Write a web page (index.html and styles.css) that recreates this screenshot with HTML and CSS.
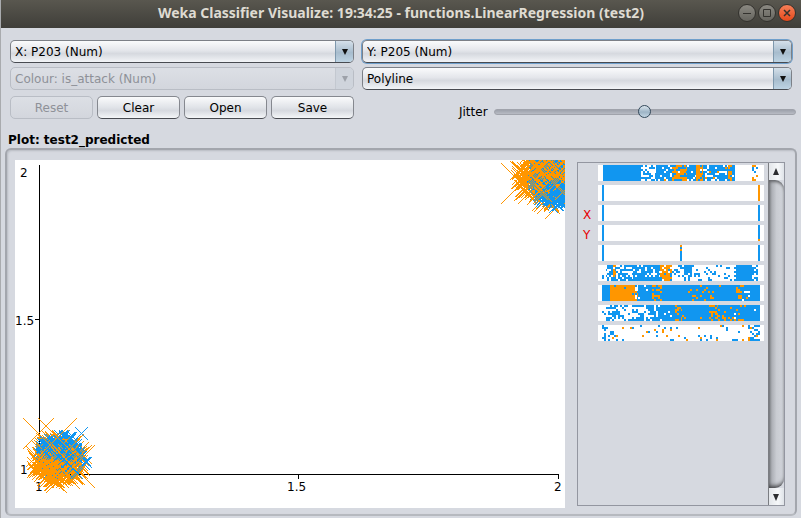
FILE: index.html
```html
<!DOCTYPE html>
<html lang="en">
<head>
<meta charset="utf-8">
<title>Weka Classifier Visualize</title>
<link rel="stylesheet" href="styles.css">
</head>
<body>
<div class="window">
  <header class="titlebar">
    <h1 class="title">Weka Classifier Visualize: 19:34:25 - functions.LinearRegression (test2)</h1>
    <div class="window-buttons">
      <button class="winbtn" aria-label="Minimize"><svg viewBox="0 0 16 16"><path d="M4 8.500h8"/></svg></button>
      <button class="winbtn" aria-label="Maximize"><svg viewBox="0 0 16 16"><path d="M4.500 4.500h7v7h-7z"/></svg></button>
      <button class="winbtn close" aria-label="Close"><svg viewBox="0 0 16 16"><path d="M5 5l6 6M11 5l-6 6"/></svg></button>
    </div>
  </header>
  <main class="content">
    <form class="controls">
      <div class="combo"><select aria-label="X axis"><option>X: P203 (Num)</option></select></div>
      <div class="combo focused"><select aria-label="Y axis"><option>Y: P205 (Num)</option></select></div>
      <div class="combo off"><select aria-label="Colour" disabled><option>Colour: is_attack (Num)</option></select></div>
      <div class="combo"><select aria-label="Selection shape"><option>Polyline</option></select></div>
      <div class="buttons">
        <button type="button" class="btn" disabled>Reset</button>
        <button type="button" class="btn">Clear</button>
        <button type="button" class="btn">Open</button>
        <button type="button" class="btn">Save</button>
      </div>
      <div class="jitter">
        <label for="jitter">Jitter</label>
        <input id="jitter" type="range" min="0" max="100" value="50">
      </div>
    </form>
    <h2 class="plot-title">Plot: test2_predicted</h2>
    <section class="plot-panel">
      <svg class="plot" viewBox="0 0 550 348" role="img" aria-label="Scatter plot of P203 against P205">
        <g class="axes">
          <path d="M24.500 5V315M24 314.500H543.500M20 159.500H24M283.500 314V319M543.500 314V319"/>
          <text x="5" y="17">2</text>
          <text x="0" y="165">1.5</text>
          <text x="5" y="314">1</text>
          <text x="20" y="331">1</text>
          <text x="272" y="331">1.5</text>
          <text x="539" y="331">2</text>
        </g>
        <g id="points" class="dots"></g>
      </svg>
      <div class="attributes">
        <div class="attr-list" id="attributes"></div>
        <div class="scrollbar">
          <button class="scroll-btn" aria-label="Scroll up"><svg viewBox="0 0 8 8"><path d="M4 0L7 7H1z"/></svg></button>
          <div class="scroll-track"></div>
          <button class="scroll-btn" aria-label="Scroll down"><svg viewBox="0 0 8 8"><path d="M1 1h6L4 8z"/></svg></button>
        </div>
      </div>
    </section>
  </main>
</div>
<script src="plot.js"></script>
</body>
</html>
```
FILE: styles.css
```css
* { box-sizing: border-box; }

body {
  margin: 0;
  background: #d6d9e0;
  font: 12px/16px "DejaVu Sans", Verdana, sans-serif;
  color: #000;
}

button, select, input { font: inherit; color: inherit; margin: 0; }

.window {
  min-height: 100vh;
  border-left: 1px solid #a9abae;
  display: flex;
  flex-direction: column;
}

.titlebar {
  height: 28px;
  display: grid;
  grid-template-columns: 1fr auto 1fr;
  align-items: center;
  padding: 0 5px 2px;
  background: linear-gradient(#59574f, #3f3e39);
}

.title {
  grid-column: 2;
  margin: 0;
  font: bold 14px/20px "Noto Sans", "Open Sans", sans-serif;
  color: #dfdbd2;
  white-space: nowrap;
}

.window-buttons {
  display: flex;
  justify-content: flex-end;
  gap: 2px;
}

.winbtn {
  width: 18px;
  height: 18px;
  padding: 0;
  border: 1px solid #33322e;
  border-radius: 50%;
  background: linear-gradient(#8b8982, #65645e);
}

.winbtn svg {
  display: block;
  width: 16px;
  height: 16px;
  fill: none;
  stroke: #33322e;
  stroke-width: 1;
}

.winbtn.close { background: linear-gradient(#f67f58, #e4491b); }
.winbtn.close svg { stroke-width: 1.5; }

.content {
  flex: 1;
  display: flex;
  flex-direction: column;
  padding: 12px 4px 2px;
}

.controls {
  display: grid;
  grid-template-columns: 344fr 430fr;
  column-gap: 8px;
  row-gap: 4px;
  padding: 0 5px;
}

.combo {
  position: relative;
  height: 23px;
  border: 1px solid #7c8087;
  border-bottom-color: #484b51;
  border-radius: 5px;
  background: linear-gradient(#fafbfc, #e4e6eb 45%, #d6d9df 60%, #f2f4f7);
  overflow: hidden;
}

.combo select {
  appearance: none;
  width: 100%;
  height: 21px;
  padding: 0 20px 0 4px;
  border: 0;
  background: none;
  outline: none;
}

.combo::before {
  content: "";
  position: absolute;
  inset: 0 0 0 auto;
  width: 17px;
  border-left: 1px solid #7e98ad;
  background: linear-gradient(#d5e0ea, #a7bccd 55%, #bdd3e3);
}

.combo::after {
  content: "";
  position: absolute;
  right: 5px;
  top: 8px;
  border: 3px solid transparent;
  border-top: 6px solid #111;
  border-bottom: 0;
}

.focused {
  overflow: visible;
  box-shadow: 0 0 0 1px #6f9fcb;
}

.focused::before { border-radius: 0 4px 4px 0; }

.off {
  border-color: #b9bdc5;
  background: linear-gradient(#dcdfe5, #d3d6dd);
}

.off select { color: #8e9198; opacity: 1; }
.off::before { background: #cfd4dc; border-color: #c3c8d0; }
.off::after { border-top-color: #9da1a9; }

.buttons {
  display: flex;
  gap: 4px;
  margin-top: 2px;
}

.btn {
  flex: 1;
  height: 23px;
  padding: 0;
  border: 1px solid #85888f;
  border-bottom-color: #484b51;
  border-radius: 5px;
  background: linear-gradient(#fafbfc, #e0e3e8 50%, #d6d9df 65%, #f4f6f8);
}

.btn:disabled {
  color: #8e9198;
  border-color: #b9bdc5;
  background: linear-gradient(#dcdfe5, #d3d6dd);
}

.jitter {
  display: flex;
  align-items: center;
  gap: 6px;
  padding: 10px 0 0 97px;
  margin-right: -4px;
}

.jitter input {
  appearance: none;
  flex: 1;
  min-width: 0;
  height: 16px;
  background: none;
}

.jitter input::-webkit-slider-runnable-track {
  height: 6px;
  border: 1px solid #a0a3ab;
  border-radius: 3px;
  background: linear-gradient(#9da1ab, #b8bbc4);
}

.jitter input::-webkit-slider-thumb {
  appearance: none;
  width: 13px;
  height: 13px;
  margin-top: -5px;
  border: 1px solid #33495b;
  border-radius: 50%;
  background: linear-gradient(#dbe5ed, #9db4c6 55%, #c2d5e3);
}

.plot-title {
  margin: 12px 3px 0;
  font: bold 12px/16px "DejaVu Sans", Verdana, sans-serif;
}

.plot-panel {
  flex: 1;
  display: grid;
  grid-template-columns: 550fr 208fr;
  column-gap: 12px;
  align-items: start;
  padding: 10px 10px 6px 8px;
  border: 2px solid #a3a6ad;
  border-bottom-color: #b6b9bf;
  border-radius: 6px;
  box-shadow: inset 1px 1px 2px #b9bcc3;
}

.plot {
  display: block;
  width: 100%;
  background: #fff;
}

.axes path {
  fill: none;
  stroke: #000;
  shape-rendering: crispEdges;
}

.dots { shape-rendering: crispEdges; }
.blue { fill: #1196f0; }
.orange { fill: #ff9600; }

.attributes {
  align-self: stretch;
  display: flex;
  margin: 2px 0;
  border: 1px solid #9396a0;
}

.attr-list {
  flex: 1;
  min-width: 0;
  display: flex;
  flex-direction: column;
  gap: 4px;
  padding: 2px 4px 0 0;
}

.attr {
  display: grid;
  grid-template-columns: 15px 1fr;
  padding-left: 5px;
  height: 16px;
}

.attr-name { color: #e60000; line-height: 20px; }

.strip {
  display: block;
  width: 100%;
  height: 16px;
  background: #fff;
  shape-rendering: crispEdges;
}

.scrollbar {
  width: 16px;
  display: flex;
  flex-direction: column;
  border-left: 1px solid #7b7d82;
}

.scroll-btn {
  height: 17px;
  padding: 4px 3px;
  border: 0;
  background: linear-gradient(90deg, #e3e6ea, #f6f8fa 60%, #dfe3e8);
}

.scroll-btn svg {
  display: block;
  width: 8px;
  height: 8px;
  fill: #2c2d30;
}

.scroll-track {
  flex: 1;
  border-radius: 0 9px 9px 0;
  background: linear-gradient(90deg, #85878c, #adb0b6 20%, #c9ccd2 50%, #d2d5db);
  box-shadow: inset 0 3px 3px -1px #66686c, inset 0 -4px 4px -2px #3c3d40;
}
```
FILE: plot.js
```js
// Seeded generator (mulberry32), so every redraw gives the same jitter.
let seed = 20517;
function rnd() {
  seed = (seed + 0x6d2b79f5) | 0;
  let t = Math.imul(seed ^ (seed >>> 15), 1 | seed);
  t = (t + Math.imul(t ^ (t >>> 7), 61 | t)) ^ t;
  return ((t ^ (t >>> 14)) >>> 0) / 4294967296;
}
const between = (a, b) => a + rnd() * (b - a);
const NS = "http://www.w3.org/2000/svg";

function addPath(parent, cls, d) {
  const path = document.createElementNS(NS, "path");
  path.setAttribute("class", cls);
  path.setAttribute("d", d);
  parent.appendChild(path);
}

// Crosses are drawn as unit dots on a grid; a later cross covers an earlier one.
const dots = new Map();

function cross(cls, x, y, s) {
  for (let k = -s; k <= s; k++) {
    dots.set(`${x + k} ${y + k}`, cls);
    dots.set(`${x + k} ${y - k}`, cls);
  }
}

// Centres spread over an ellipse; the size is the half-width of a cross.
function crosses(cls, n, cx, cy, rx, ry, small, large) {
  for (let i = 0; i < n; i++) {
    const a = between(0, 2 * Math.PI), r = Math.sqrt(rnd());
    cross(cls, Math.round(cx + Math.cos(a) * r * rx), Math.round(cy + Math.sin(a) * r * ry),
          Math.round(between(small, large)));
  }
}

// Low cluster
crosses("orange", 190, 44, 299, 25, 23, 3, 10);
crosses("blue", 230, 45, 294, 23, 21, 2, 5);
crosses("orange", 75, 37, 308, 19, 14, 3, 8);
crosses("orange", 20, 48, 300, 21, 18, 7, 12);
crosses("blue", 24, 38, 288, 14, 9, 3, 6);
crosses("blue", 16, 60, 299, 12, 16, 3, 6);
cross("orange", 23, 273, 15);
cross("orange", 42, 277, 19);
cross("orange", 58, 306, 21);
cross("blue", 66, 273, 6);

// High cluster
crosses("orange", 200, 533, 17, 28, 27, 4, 11);
crosses("blue", 260, 538, 19, 25, 29, 2, 5);
crosses("orange", 50, 531, 9, 28, 22, 5, 10);
crosses("orange", 22, 534, 20, 23, 20, 8, 13);
cross("orange", 506, 23, 20);
cross("orange", 545, 43, 15);
crosses("blue", 75, 541, 33, 13, 13, 2, 5);
crosses("orange", 5, 538, 30, 18, 12, 7, 11);

let bluePoints = "", orangePoints = "";
for (const [at, cls] of dots) {
  const dot = `M${at}h1v1h-1z`;
  if (cls === "blue") bluePoints += dot;
  else orangePoints += dot;
}
addPath(document.getElementById("points"), "blue", bluePoints);
addPath(document.getElementById("points"), "orange", orangePoints);

// Each band is [from, to, blue share, orange share] along a 166px strip.
const edge = [[4, 6, 1, 0]];
const attributes = [
  { bands: [[5, 43, 1, 0], [43, 58, .5, 0], [58, 74, .85, .02], [74, 89, .4, .5], [89, 98, .85, .05],
            [98, 105, .1, .85], [105, 130, .72, .05], [130, 134, .3, .7], [134, 137, .9, 0],
            [154, 160, .1, .25]] },
  { bands: [...edge, [160, 162, 0, 1]] },
  { name: "X", bands: [...edge, [160, 162, .85, .15]] },
  { name: "Y", bands: [...edge, [160, 162, .85, .15]] },
  { bands: [...edge, [82, 84, .95, .05], [160, 162, .95, .05]] },
  { bands: [[4, 9, .2, 0], [9, 15, .75, 0], [15, 18, .5, .4], [18, 35, .5, 0], [35, 62, .72, 0],
            [62, 74, .15, .65], [74, 86, .22, 0], [86, 94, .85, 0], [94, 138, .16, 0],
            [138, 154, 1, 0], [154, 160, .45, 0]] },
  { bands: [[4, 12, 1, 0], [12, 37, .02, .98], [37, 40, .2, .3], [40, 54, .98, 0], [54, 64, .65, .35],
            [64, 90, 1, 0], [90, 117, .87, .13], [117, 138, .99, .01], [138, 144, .6, .4],
            [144, 152, .85, .05], [152, 162, .99, 0]] },
  { bands: [[4, 10, .25, 0], [10, 50, .4, 0], [50, 60, .7, 0], [60, 77, .96, 0], [77, 84, .5, .5],
            [84, 111, .97, .03], [111, 120, .6, .4], [120, 146, .86, .12], [146, 162, .98, .01]] },
  { bands: [[4, 8, .6, .1], [8, 16, .2, .05], [16, 150, .07, .025], [150, 162, .4, .1]] }
];

const list = document.getElementById("attributes");
for (const { name = "", bands } of attributes) {
  const row = document.createElement("div");
  row.className = "attr";
  const label = document.createElement("span");
  label.className = "attr-name";
  label.textContent = name;
  const strip = document.createElementNS(NS, "svg");
  strip.setAttribute("class", "strip");
  strip.setAttribute("viewBox", "0 0 166 16");
  strip.setAttribute("preserveAspectRatio", "none");
  let blue = "", orange = "";
  for (const [from, to, b, o] of bands) {
    for (let x = from; x < to; x += 2) {
      for (let y = 0; y < 16; y += 2) {
        const r = rnd(), w = Math.min(2, to - x);
        const cell = `M${x} ${y}h${w}v2h${-w}z`;
        if (r < b) blue += cell;
        else if (r < b + o) orange += cell;
      }
    }
  }
  addPath(strip, "blue", blue);
  addPath(strip, "orange", orange);
  row.append(label, strip);
  list.appendChild(row);
}
```
